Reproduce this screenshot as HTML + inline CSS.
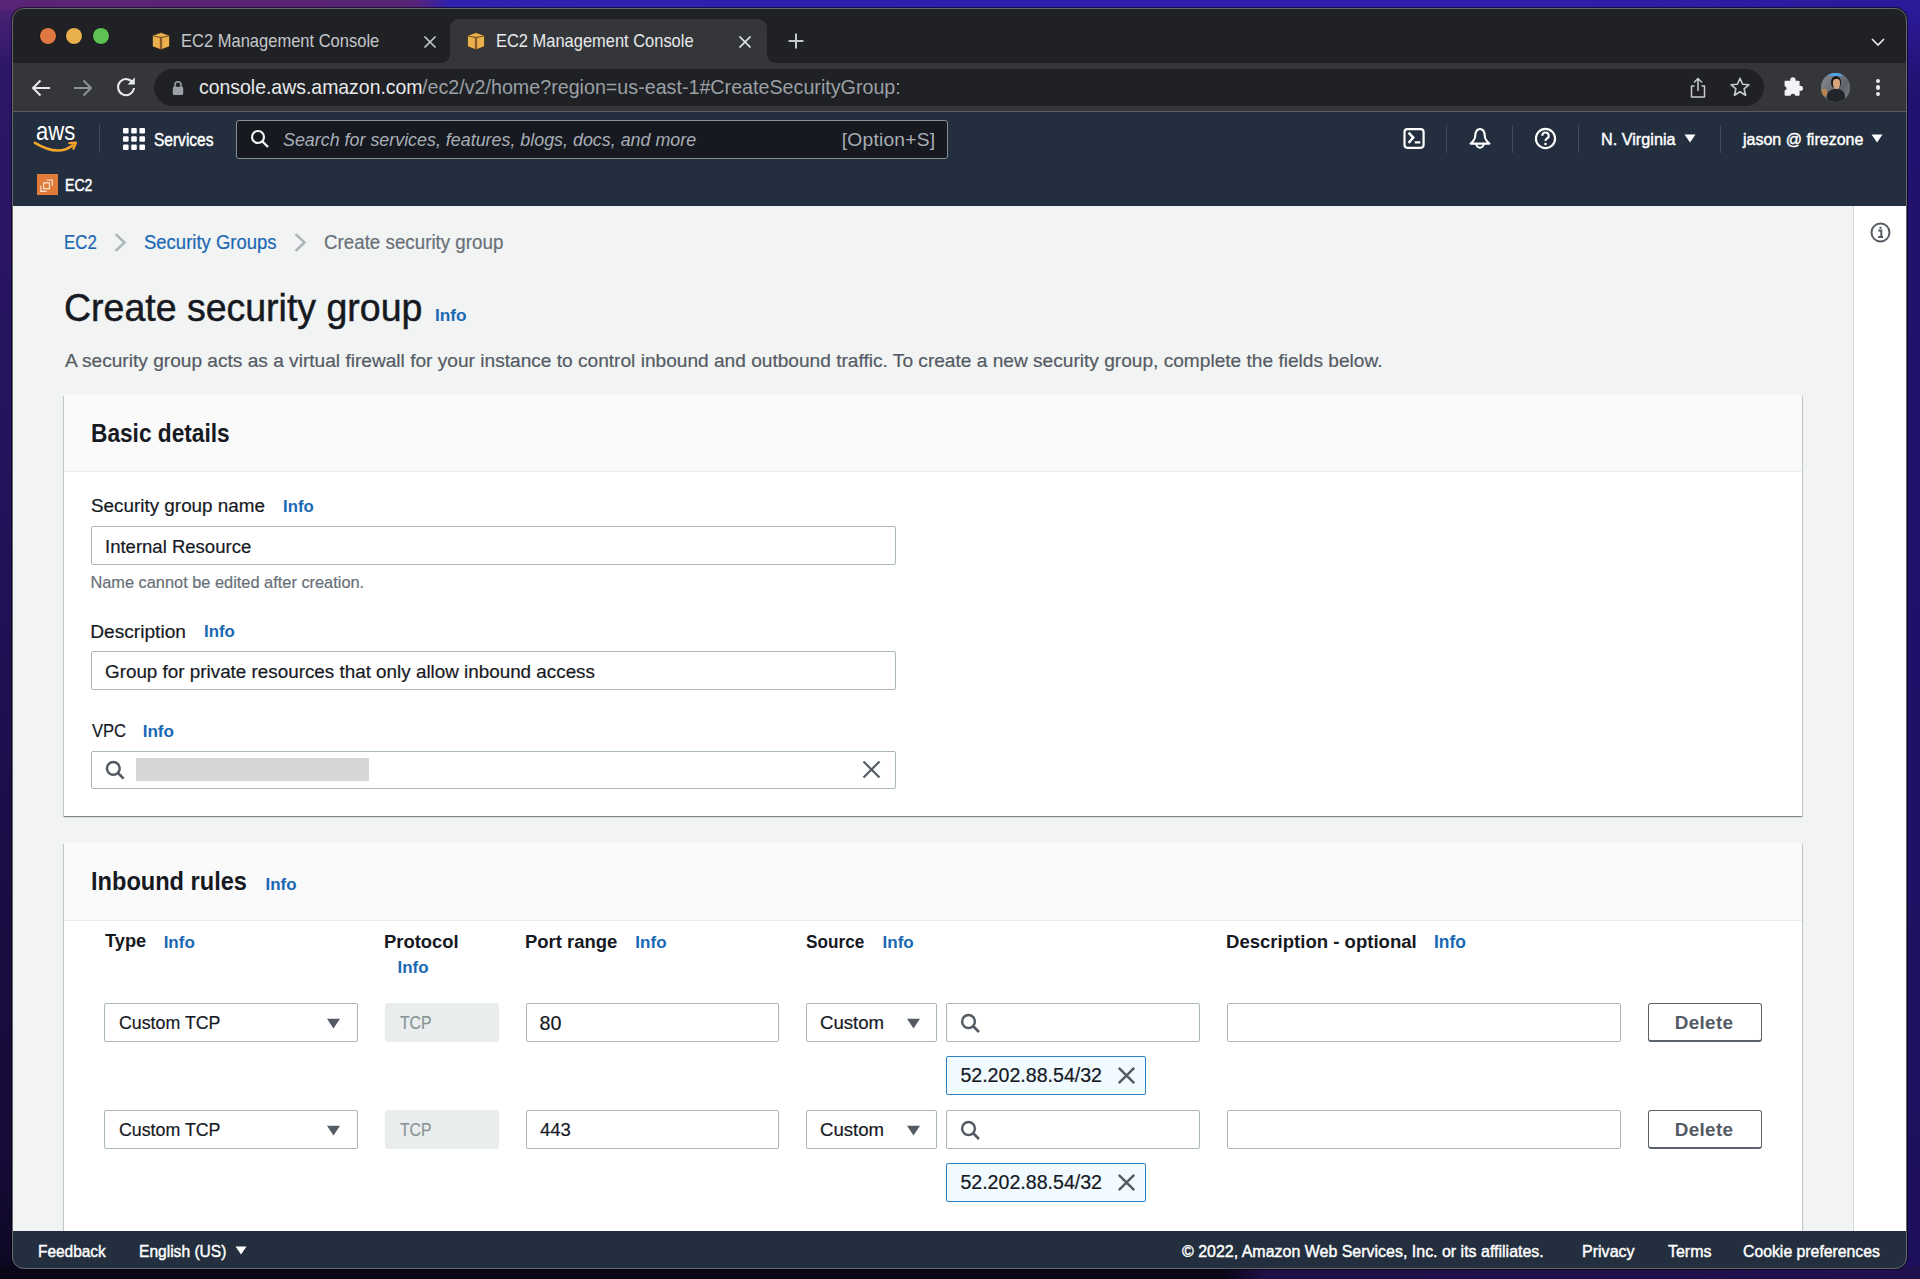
<!DOCTYPE html>
<html><head><meta charset="utf-8">
<style>
*{box-sizing:border-box;margin:0;padding:0}
html,body{width:1920px;height:1279px;overflow:hidden}
body{position:relative;font-family:"Liberation Sans",sans-serif;
 background:
  linear-gradient(90deg, rgba(92,38,122,1) 0px, rgba(88,36,120,1) 420px, rgba(46,32,166,1) 460px, rgba(44,28,160,1) 1920px);
}
.bgl{position:absolute;left:0;top:0;width:1920px;height:1279px;
 background:linear-gradient(180deg, rgba(0,0,0,0) 0px, rgba(0,0,0,0) 10px, rgba(8,4,20,0.0) 12px);}
.t{position:absolute;white-space:pre;font-family:"Liberation Sans",sans-serif}
.abs{position:absolute}
#win{position:absolute;left:12px;top:8px;width:1895px;height:1261px;border-radius:12px;overflow:hidden;background:#202124;box-shadow:0 0 0 1px rgba(0,0,0,.55)}
#winb{position:absolute;left:12px;top:8px;width:1895px;height:1261px;border-radius:12px;border:1px solid #64676b;pointer-events:none}
.inp{position:absolute;background:#fff;border:1px solid #aab7b8;border-radius:2px}
.info-l{color:#0073bb}
</style></head>
<body>
<div class="abs" style="left:0;top:0;width:1920px;height:1279px;background:#1a0c42"></div>
<div class="abs" style="left:0;top:0;width:1920px;height:12px;background:linear-gradient(90deg,#5a2476 0,#582478 415px,#3020ae 450px,#2f1fac 1500px,#2a1a98 1920px)"></div>
<div class="abs" style="left:0;top:10px;width:14px;height:1269px;background:linear-gradient(180deg,#4a2275 0,#2c1668 60px,#25135e 400px,#1f0f50 700px,#1a0c42 900px,#160b38 1150px,#0c0720 1269px)"></div>
<div class="abs" style="left:1905px;top:10px;width:15px;height:1269px;background:linear-gradient(180deg,#2b1a9a 0,#22116e 80px,#20106a 600px,#1e0f5c 1269px)"></div>
<div class="abs" style="left:0;top:1266px;width:1920px;height:13px;background:linear-gradient(90deg,#0a0618 0,#0a0618 1225px,#1f0f48 1265px,#21104e 1920px)"></div>
<div id="win">
 <!-- tab strip -->
 <div class="abs" style="left:0;top:0;width:1895px;height:55px;background:#202124"></div>
 <!-- traffic lights -->
 <div class="abs" style="left:27.5px;top:20px;width:16px;height:16px;border-radius:50%;background:#df7944;box-shadow:0 0 0 0.6px rgba(0,0,0,.5)"></div>
 <div class="abs" style="left:54px;top:20px;width:16px;height:16px;border-radius:50%;background:#e8b04c;box-shadow:0 0 0 0.6px rgba(0,0,0,.5)"></div>
 <div class="abs" style="left:80.5px;top:20px;width:16px;height:16px;border-radius:50%;background:#5fc153;box-shadow:0 0 0 0.6px rgba(0,0,0,.5)"></div>
 <!-- active tab -->
 <div class="abs" style="left:438px;top:11px;width:316.5px;height:45px;background:#35363a;border-radius:9px 9px 0 0"></div>
 <div class="abs" style="left:430px;top:47px;width:8px;height:8px;background:radial-gradient(circle at 0 0, #202124 7.5px, #35363a 8px)"></div>
 <div class="abs" style="left:754.5px;top:47px;width:8px;height:8px;background:radial-gradient(circle at 100% 0, #202124 7.5px, #35363a 8px)"></div>
 <!-- tab favicons -->
 <svg class="abs" style="left:139px;top:23px" width="20" height="20" viewBox="0 0 20 20">
  <path d="M1.5 4.5 L10 1.5 L18.5 4.5 L18.5 15.5 L10 18.8 L1.5 15.5 Z" fill="#e9b24e" stroke="#1a1a1a" stroke-width="0.6"/>
  <path d="M1.8 4.6 Q10 8 18.2 4.6" fill="none" stroke="#6b4a22" stroke-width="1"/>
  <path d="M10 6.2 L10 18" stroke="#6b4a22" stroke-width="1.6"/>
  <path d="M8.6 7 L8.6 18 M11.4 7 L11.4 18" stroke="#e4663a" stroke-width="0.6" stroke-dasharray="1 1"/>
 </svg>
 <svg class="abs" style="left:454px;top:23px" width="20" height="20" viewBox="0 0 20 20">
  <path d="M1.5 4.5 L10 1.5 L18.5 4.5 L18.5 15.5 L10 18.8 L1.5 15.5 Z" fill="#e9b24e" stroke="#1a1a1a" stroke-width="0.6"/>
  <path d="M1.8 4.6 Q10 8 18.2 4.6" fill="none" stroke="#6b4a22" stroke-width="1"/>
  <path d="M10 6.2 L10 18" stroke="#6b4a22" stroke-width="1.6"/>
  <path d="M8.6 7 L8.6 18 M11.4 7 L11.4 18" stroke="#e4663a" stroke-width="0.6" stroke-dasharray="1 1"/>
 </svg>
 <!-- tab close -->
 <svg class="abs" style="left:411px;top:27px" width="14" height="14" viewBox="0 0 14 14"><path d="M1.5 1.5 L12.5 12.5 M12.5 1.5 L1.5 12.5" stroke="#c4c7cb" stroke-width="1.7"/></svg>
 <svg class="abs" style="left:726px;top:27px" width="14" height="14" viewBox="0 0 14 14"><path d="M1.5 1.5 L12.5 12.5 M12.5 1.5 L1.5 12.5" stroke="#e8eaed" stroke-width="1.7"/></svg>
 <!-- new tab + -->
 <svg class="abs" style="left:775px;top:24px" width="18" height="18" viewBox="0 0 18 18"><path d="M9 1.5 V16.5 M1.5 9 H16.5" stroke="#c4c7cb" stroke-width="2"/></svg>
 <!-- tab list chevron -->
 <svg class="abs" style="left:1857.5px;top:27.5px" width="16" height="12" viewBox="0 0 16 12"><path d="M2 3 L8 9 L14 3" fill="none" stroke="#e8eaed" stroke-width="1.6"/></svg>

 <!-- toolbar -->
 <div class="abs" style="left:0;top:55px;width:1895px;height:48px;background:#35363a"></div>
 <div class="abs" style="left:0;top:102.5px;width:1895px;height:1px;background:#5a5c60"></div>
 <!-- back/forward/reload -->
 <svg class="abs" style="left:18px;top:69px" width="22" height="22" viewBox="0 0 22 22"><path d="M20 11 H3.5 M10.5 3.5 L3 11 L10.5 18.5" fill="none" stroke="#e8eaed" stroke-width="2"/></svg>
 <svg class="abs" style="left:60px;top:69px" width="22" height="22" viewBox="0 0 22 22"><path d="M2 11 H18.5 M11.5 3.5 L19 11 L11.5 18.5" fill="none" stroke="#8e9196" stroke-width="2"/></svg>
 <svg class="abs" style="left:103px;top:68px" width="22" height="22" viewBox="0 0 22 22"><path d="M18.2 7.5 A8 8 0 1 0 19 12" fill="none" stroke="#e8eaed" stroke-width="2"/><path d="M12.5 8.5 L19.8 8.5 L19.8 1.5 Z" fill="#e8eaed"/></svg>
 <!-- omnibox -->
 <div class="abs" style="left:142px;top:61px;width:1610px;height:37px;border-radius:18.5px;background:#202124"></div>
 <svg class="abs" style="left:160px;top:72px" width="12" height="16" viewBox="0 0 12 16"><path d="M3 7 V4.8 A3 3 0 0 1 9 4.8 V7" fill="none" stroke="#9aa0a6" stroke-width="1.6"/><rect x="0.8" y="6.8" width="10.4" height="8.2" rx="1.2" fill="#9aa0a6"/></svg>
 <!-- share / star -->
 <svg class="abs" style="left:1677px;top:69px" width="18" height="22" viewBox="0 0 18 22"><path d="M9 14 V2 M5 5.5 L9 1.5 L13 5.5" fill="none" stroke="#c8cbcf" stroke-width="1.5"/><path d="M5.5 9 H2.5 V20 H15.5 V9 H12.5" fill="none" stroke="#c8cbcf" stroke-width="1.5" stroke-linejoin="round"/></svg>
 <svg class="abs" style="left:1717px;top:68px" width="22" height="22" viewBox="0 0 22 22"><path d="M11 2.2 L13.6 8.2 L20 8.7 L15.1 12.9 L16.6 19.2 L11 15.8 L5.4 19.2 L6.9 12.9 L2 8.7 L8.4 8.2 Z" fill="none" stroke="#c8cbcf" stroke-width="1.6" stroke-linejoin="round"/></svg>
 <!-- puzzle -->
 <svg class="abs" style="left:1771px;top:68px" width="24" height="22" viewBox="0 0 24 22"><g fill="#f1f3f4"><rect x="1.6" y="4.8" width="15" height="15" rx="0.8"/><circle cx="9.9" cy="3.9" r="2.7"/><circle cx="17.4" cy="12.3" r="2.6"/></g><g fill="#35363a"><circle cx="1.4" cy="12.3" r="2.1"/><circle cx="9.9" cy="20.2" r="2.4"/></g></svg>
 <!-- avatar -->
 <div class="abs" style="left:1809px;top:64.5px;width:29px;height:29px;border-radius:50%;background:#6d7279;overflow:hidden">
  <div class="abs" style="left:0;top:0;width:29px;height:29px;background:linear-gradient(135deg,#8a9097 0,#5f646b 60%,#7b8088 100%)"></div>
  <div class="abs" style="left:5px;top:-1px;width:19px;height:4px;border-radius:50%;background:#4fa3e6"></div>
  <div class="abs" style="left:10px;top:3.5px;width:10px;height:12px;border-radius:50% 50% 40% 40%;background:#1e1a18"></div>
  <div class="abs" style="left:11.5px;top:6px;width:7.5px;height:10px;border-radius:40% 40% 50% 50%;background:#d9a57f"></div>
  <div class="abs" style="left:6px;top:16px;width:18px;height:15px;border-radius:45% 45% 0 0;background:#22242a"></div>
  <div class="abs" style="left:0px;top:16px;width:6px;height:7px;background:#c58a45;opacity:.8"></div>
 </div>
 <!-- kebab -->
 <div class="abs" style="left:1863.5px;top:70.5px;width:4.5px;height:4.5px;border-radius:50%;background:#e8eaed"></div>
 <div class="abs" style="left:1863.5px;top:77px;width:4.5px;height:4.5px;border-radius:50%;background:#e8eaed"></div>
 <div class="abs" style="left:1863.5px;top:83.5px;width:4.5px;height:4.5px;border-radius:50%;background:#e8eaed"></div>

 <!-- AWS nav -->
 <div class="abs" style="left:0;top:103.5px;width:1895px;height:94.5px;background:#232f3e"></div>
 <!-- aws logo -->
 <svg class="abs" style="left:20px;top:112px" width="48" height="34" viewBox="0 0 48 34">
  <text x="4.0" y="20.2" font-family="Liberation Sans" font-size="25" fill="#ffffff" textLength="39.2" lengthAdjust="spacingAndGlyphs">aws</text>
  <path d="M2.9 22.9 Q26.4 37 40.7 25.2" fill="none" stroke="#f3a52a" stroke-width="2.5" stroke-linecap="round"/>
  <path d="M37.3 23.1 L44 22.7 L41.4 28.8" fill="none" stroke="#f3a52a" stroke-width="2.2" stroke-linecap="round" stroke-linejoin="round"/>
 </svg>
 <div class="abs" style="left:87px;top:116px;width:1px;height:29px;background:#414d5c"></div>
 <!-- grid icon -->
 <svg class="abs" style="left:110.5px;top:119.5px" width="22" height="22" viewBox="0 0 22 22">
  <g fill="#ffffff"><rect x="0" y="0" width="5.6" height="5.6" rx="1"/><rect x="8.2" y="0" width="5.6" height="5.6" rx="1"/><rect x="16.4" y="0" width="5.6" height="5.6" rx="1"/>
  <rect x="0" y="8.2" width="5.6" height="5.6" rx="1"/><rect x="8.2" y="8.2" width="5.6" height="5.6" rx="1"/><rect x="16.4" y="8.2" width="5.6" height="5.6" rx="1"/>
  <rect x="0" y="16.4" width="5.6" height="5.6" rx="1"/><rect x="8.2" y="16.4" width="5.6" height="5.6" rx="1"/><rect x="16.4" y="16.4" width="5.6" height="5.6" rx="1"/></g>
 </svg>
 <!-- search box -->
 <div class="abs" style="left:223.5px;top:111.5px;width:712.5px;height:39px;background:#16191f;border:1px solid #879196;border-radius:3px"></div>
 <svg class="abs" style="left:238px;top:121px" width="20" height="20" viewBox="0 0 20 20"><circle cx="8" cy="8" r="6" fill="none" stroke="#f2f3f3" stroke-width="2.2"/><path d="M12.5 12.5 L18 18" stroke="#f2f3f3" stroke-width="2.4"/></svg>
 <!-- right icons -->
 <svg class="abs" style="left:1390px;top:119px" width="23" height="23" viewBox="0 0 23 23"><rect x="2.5" y="2.2" width="19.1" height="18.6" rx="3" fill="none" stroke="#fff" stroke-width="2.2"/><path d="M6.6 5.6 L11.2 10.6 L6.6 15.8" fill="none" stroke="#fff" stroke-width="2.5"/><path d="M12.8 15.4 H18.3" stroke="#fff" stroke-width="2.4"/></svg>
 <div class="abs" style="left:1434px;top:117px;width:1px;height:28px;background:#414d5c"></div>
 <svg class="abs" style="left:1456px;top:119px" width="24" height="23" viewBox="0 0 24 23"><path d="M12 2 C8.6 2 7.4 5.5 7.2 9.2 C7 12.6 5 14.6 2.6 16.6 L21.4 16.6 C19 14.6 17 12.6 16.8 9.2 C16.6 5.5 15.4 2 12 2 Z" fill="none" stroke="#fff" stroke-width="2.1" stroke-linejoin="round"/><path d="M8.4 17 A3.6 3.6 0 0 0 15.6 17" fill="none" stroke="#fff" stroke-width="2.1"/></svg>
 <div class="abs" style="left:1500px;top:117px;width:1px;height:28px;background:#414d5c"></div>
 <svg class="abs" style="left:1522px;top:119px" width="23" height="23" viewBox="0 0 23 23"><circle cx="11.5" cy="11.5" r="9.6" fill="none" stroke="#fff" stroke-width="2.1"/><path d="M8.3 8.8 A3.2 3.2 0 1 1 12.8 11.6 Q11.5 12.3 11.5 14" fill="none" stroke="#fff" stroke-width="2.1"/><circle cx="11.5" cy="17" r="1.3" fill="#fff"/></svg>
 <div class="abs" style="left:1566px;top:117px;width:1px;height:28px;background:#414d5c"></div>
 <svg class="abs" style="left:1672px;top:126px" width="12" height="9" viewBox="0 0 12 9"><path d="M0.5 0.5 H11.5 L6 8.5 Z" fill="#fff"/></svg>
 <div class="abs" style="left:1707.5px;top:117px;width:1px;height:28px;background:#414d5c"></div>
 <svg class="abs" style="left:1858.5px;top:126px" width="12" height="9" viewBox="0 0 12 9"><path d="M0.5 0.5 H11.5 L6 8.5 Z" fill="#fff"/></svg>
 <!-- EC2 icon -->
 <div class="abs" style="left:25px;top:165.8px;width:21px;height:21.5px;background:#e07b3a"></div>
 <svg class="abs" style="left:25px;top:165.8px" width="21" height="21.5" viewBox="0 0 22 22"><path d="M4 12 V18 H10 M7 9 V15 H13 V9 Z M10 6 H16 V12" fill="none" stroke="#fbe6d6" stroke-width="1.2"/></svg>

 <!-- content area -->
 <div class="abs" style="left:0;top:198px;width:1895px;height:1025px;background:#f2f3f3"></div>
 <div class="abs" style="left:1841px;top:198px;width:54px;height:1025px;background:#ffffff;border-left:1px solid #d5dbdb"></div>
 <svg class="abs" style="left:1858px;top:214px" width="21" height="21" viewBox="0 0 21 21"><circle cx="10.5" cy="10.5" r="9" fill="none" stroke="#545b64" stroke-width="2"/><rect x="9.5" y="4.8" width="2" height="2" fill="#545b64"/><path d="M8.2 8.5 H11.3 V14.5 M8.2 15 H13" fill="none" stroke="#545b64" stroke-width="2"/></svg>
 <!-- breadcrumbs chevrons -->
 <svg class="abs" style="left:101px;top:224px" width="15" height="21" viewBox="0 0 15 21"><path d="M2.6 2.2 L11.6 10.5 L2.6 18.8" fill="none" stroke="#aab7b8" stroke-width="2.5"/></svg>
 <svg class="abs" style="left:280.5px;top:224px" width="15" height="21" viewBox="0 0 15 21"><path d="M2.6 2.2 L11.6 10.5 L2.6 18.8" fill="none" stroke="#aab7b8" stroke-width="2.5"/></svg>

 <!-- container 1 -->
 <div class="abs" style="left:52px;top:387px;width:1738px;height:421px;background:#fff;box-shadow:0 1px 1px 0 rgba(0,28,36,.3),1px 1px 1px 0 rgba(0,28,36,.15),-1px 1px 1px 0 rgba(0,28,36,.15)">
  <div class="abs" style="left:0;top:0;width:1738px;height:77px;background:#fafafa;border-bottom:1px solid #eaeded"></div>
 </div>
 <div class="inp" style="left:79px;top:518px;width:805px;height:39px"></div>
 <div class="inp" style="left:79px;top:643px;width:805px;height:39px"></div>
 <div class="inp" style="left:79px;top:742.5px;width:805px;height:38.5px"></div>
 <svg class="abs" style="left:93px;top:752px" width="21" height="21" viewBox="0 0 21 21"><circle cx="8.3" cy="8.3" r="6.4" fill="none" stroke="#545b64" stroke-width="2.5"/><path d="M13 13 L18.6 18.6" stroke="#545b64" stroke-width="2.7"/></svg>
 <div class="abs" style="left:124px;top:750px;width:232.5px;height:23px;background:#d5d6d8"></div>
 <svg class="abs" style="left:850px;top:752px" width="19" height="19" viewBox="0 0 19 19"><path d="M1.5 1.5 L17.5 17.5 M17.5 1.5 L1.5 17.5" stroke="#545b64" stroke-width="2.2"/></svg>

 <!-- container 2 -->
 <div class="abs" style="left:52px;top:835px;width:1738px;height:450px;background:#fff;box-shadow:0 1px 1px 0 rgba(0,28,36,.3),1px 1px 1px 0 rgba(0,28,36,.15),-1px 1px 1px 0 rgba(0,28,36,.15)">
  <div class="abs" style="left:0;top:0;width:1738px;height:78px;background:#fafafa;border-bottom:1px solid #eaeded"></div>
 </div>
 <div class="inp" style="left:92.2px;top:995px;width:254px;height:39px"></div>
<svg class="abs" style="left:314px;top:1010px" width="15" height="11" viewBox="0 0 15 11"><path d="M1 0.8 H14 L7.5 10.5 Z" fill="#545b64"/></svg>
<div class="abs" style="left:373px;top:995px;width:113.7px;height:39px;background:#eaeded;border-radius:2px"></div>
<div class="inp" style="left:513.5px;top:995px;width:253px;height:39px"></div>
<div class="inp" style="left:794px;top:995px;width:131px;height:39px"></div>
<svg class="abs" style="left:893.5px;top:1010px" width="15" height="11" viewBox="0 0 15 11"><path d="M1 0.8 H14 L7.5 10.5 Z" fill="#545b64"/></svg>
<div class="inp" style="left:934.4px;top:995px;width:253.2px;height:39px"></div>
<svg class="abs" style="left:947.5px;top:1005px" width="21" height="21" viewBox="0 0 21 21"><circle cx="8.5" cy="8.5" r="6.4" fill="none" stroke="#545b64" stroke-width="2.5"/><path d="M13.2 13.2 L19 19" stroke="#545b64" stroke-width="2.7"/></svg>
<div class="inp" style="left:1215.3px;top:995px;width:393.6px;height:39px"></div>
<div class="abs" style="left:1636px;top:995px;width:114px;height:39.4px;border:1.6px solid #5b626a;border-bottom-width:2px;border-radius:3px;background:#fff"></div>
<div class="abs" style="left:934.4px;top:1048.4px;width:199.2px;height:38.4px;background:#f1faff;border:1px solid #2e83c8;border-radius:2px"></div>
<svg class="abs" style="left:1104.5px;top:1058.4px" width="19" height="19" viewBox="0 0 19 19"><path d="M1.8 1.8 L17.2 17.2 M17.2 1.8 L1.8 17.2" stroke="#545b64" stroke-width="2.5"/></svg>
<div class="inp" style="left:92.2px;top:1102px;width:254px;height:39px"></div>
<svg class="abs" style="left:314px;top:1117px" width="15" height="11" viewBox="0 0 15 11"><path d="M1 0.8 H14 L7.5 10.5 Z" fill="#545b64"/></svg>
<div class="abs" style="left:373px;top:1102px;width:113.7px;height:39px;background:#eaeded;border-radius:2px"></div>
<div class="inp" style="left:513.5px;top:1102px;width:253px;height:39px"></div>
<div class="inp" style="left:794px;top:1102px;width:131px;height:39px"></div>
<svg class="abs" style="left:893.5px;top:1117px" width="15" height="11" viewBox="0 0 15 11"><path d="M1 0.8 H14 L7.5 10.5 Z" fill="#545b64"/></svg>
<div class="inp" style="left:934.4px;top:1102px;width:253.2px;height:39px"></div>
<svg class="abs" style="left:947.5px;top:1112px" width="21" height="21" viewBox="0 0 21 21"><circle cx="8.5" cy="8.5" r="6.4" fill="none" stroke="#545b64" stroke-width="2.5"/><path d="M13.2 13.2 L19 19" stroke="#545b64" stroke-width="2.7"/></svg>
<div class="inp" style="left:1215.3px;top:1102px;width:393.6px;height:39px"></div>
<div class="abs" style="left:1636px;top:1102px;width:114px;height:39.4px;border:1.6px solid #5b626a;border-bottom-width:2px;border-radius:3px;background:#fff"></div>
<div class="abs" style="left:934.4px;top:1155.4px;width:199.2px;height:38.4px;background:#f1faff;border:1px solid #2e83c8;border-radius:2px"></div>
<svg class="abs" style="left:1104.5px;top:1165.4px" width="19" height="19" viewBox="0 0 19 19"><path d="M1.8 1.8 L17.2 17.2 M17.2 1.8 L1.8 17.2" stroke="#545b64" stroke-width="2.5"/></svg>

 <!-- footer -->
 <div class="abs" style="left:0;top:1223px;width:1895px;height:38px;background:#232f3e"></div>
 <svg class="abs" style="left:222.5px;top:1238px" width="12" height="9" viewBox="0 0 12 9"><path d="M0.5 0.5 H11.5 L6 8.5 Z" fill="#fff"/></svg>
</div>
<div class="abs" style="left:0;top:0;width:1920px;height:1279px;">
<div class="t" style="left:180.71px;top:32.20px;font-size:18.31px;line-height:18.31px;color:#c4c7cb;transform:scaleX(0.9025);transform-origin:0 0;">EC2 Management Console</div>
<div class="t" style="left:496.41px;top:32.10px;font-size:18.31px;line-height:18.31px;color:#e8eaed;transform:scaleX(0.8993);transform-origin:0 0;">EC2 Management Console</div>
<div class="t" style="left:199.09px;top:77.23px;font-size:20.64px;line-height:20.64px;color:#e8eaed;transform:scaleX(0.9421);transform-origin:0 0;">console.aws.amazon.com</div>
<div class="t" style="left:422.30px;top:77.23px;font-size:20.64px;line-height:20.64px;color:#9aa0a6;transform:scaleX(0.9545);transform-origin:0 0;">/ec2/v2/home?region=us-east-1#CreateSecurityGroup:</div>
<div class="t" style="left:154.32px;top:130.94px;font-size:18.02px;line-height:18.02px;color:#ffffff;transform:scaleX(0.8605);transform-origin:0 0;-webkit-text-stroke:0.45px #ffffff;">Services</div>
<div class="t" style="left:282.72px;top:131.00px;font-size:18.31px;line-height:18.31px;color:#a7aeb6;transform:scaleX(0.9765);transform-origin:0 0;font-style:italic;">Search for services, features, blogs, docs, and more</div>
<div class="t" style="left:841.80px;top:130.22px;font-size:19.23px;line-height:19.23px;color:#a7aeb6;letter-spacing:0.216px;">[Option+S]</div>
<div class="t" style="left:1600.93px;top:131.18px;font-size:17.15px;line-height:17.15px;color:#ffffff;transform:scaleX(0.9462);transform-origin:0 0;-webkit-text-stroke:0.45px #ffffff;">N. Virginia</div>
<div class="t" style="left:1743.20px;top:131.18px;font-size:17.15px;line-height:17.15px;color:#ffffff;transform:scaleX(0.9340);transform-origin:0 0;-webkit-text-stroke:0.45px #ffffff;">jason @ firezone</div>
<div class="t" style="left:64.70px;top:177.48px;font-size:17.15px;line-height:17.15px;color:#ffffff;transform:scaleX(0.8235);transform-origin:0 0;-webkit-text-stroke:0.45px #ffffff;">EC2</div>
<div class="t" style="left:63.88px;top:232.87px;font-size:19.77px;line-height:19.77px;color:#1a68b4;transform:scaleX(0.8530);transform-origin:0 0;-webkit-text-stroke:0.2px #1a68b4;">EC2</div>
<div class="t" style="left:144.42px;top:232.87px;font-size:19.77px;line-height:19.77px;color:#1a68b4;transform:scaleX(0.9353);transform-origin:0 0;-webkit-text-stroke:0.2px #1a68b4;">Security Groups</div>
<div class="t" style="left:323.82px;top:232.87px;font-size:19.77px;line-height:19.77px;color:#687078;transform:scaleX(0.9490);transform-origin:0 0;-webkit-text-stroke:0.2px #687078;">Create security group</div>
<div class="t" style="left:64.24px;top:289.23px;font-size:38.95px;line-height:38.95px;color:#16191f;transform:scaleX(0.9626);transform-origin:0 0;-webkit-text-stroke:0.5px #16191f;">Create security group</div>
<div class="t" style="left:434.92px;top:307.18px;font-size:17.27px;line-height:17.27px;color:#1a68b4;font-weight:bold;">Info</div>
<div class="t" style="left:65.00px;top:351.21px;font-size:19.12px;line-height:19.12px;color:#545b64;-webkit-text-stroke:0.2px #545b64;">A security group acts as a virtual firewall for your instance to control inbound and outbound traffic. To create a new security group, complete the fields below.</div>
<div class="t" style="left:90.78px;top:420.99px;font-size:25.29px;line-height:25.29px;color:#16191f;transform:scaleX(0.8972);transform-origin:0 0;font-weight:bold;">Basic details</div>
<div class="t" style="left:91.11px;top:496.91px;font-size:18.90px;line-height:18.90px;color:#16191f;transform:scaleX(0.9983);transform-origin:0 0;-webkit-text-stroke:0.2px #16191f;">Security group name</div>
<div class="t" style="left:282.85px;top:498.63px;font-size:16.86px;line-height:16.86px;color:#1a68b4;transform:scaleX(0.9935);transform-origin:0 0;font-weight:bold;">Info</div>
<div class="t" style="left:104.80px;top:537.51px;font-size:18.90px;line-height:18.90px;color:#16191f;transform:scaleX(0.9806);transform-origin:0 0;-webkit-text-stroke:0.2px #16191f;">Internal Resource</div>
<div class="t" style="left:90.42px;top:574.04px;font-size:16.38px;line-height:16.38px;color:#687078;-webkit-text-stroke:0.2px #687078;">Name cannot be edited after creation.</div>
<div class="t" style="left:90.20px;top:622.47px;font-size:19.17px;line-height:19.17px;color:#16191f;-webkit-text-stroke:0.2px #16191f;">Description</div>
<div class="t" style="left:203.75px;top:624.43px;font-size:16.86px;line-height:16.86px;color:#1a68b4;transform:scaleX(0.9969);transform-origin:0 0;font-weight:bold;">Info</div>
<div class="t" style="left:105.32px;top:662.71px;font-size:18.90px;line-height:18.90px;color:#16191f;transform:scaleX(0.9970);transform-origin:0 0;-webkit-text-stroke:0.2px #16191f;">Group for private resources that only allow inbound access</div>
<div class="t" style="left:91.50px;top:721.61px;font-size:18.90px;line-height:18.90px;color:#16191f;transform:scaleX(0.8770);transform-origin:0 0;-webkit-text-stroke:0.2px #16191f;">VPC</div>
<div class="t" style="left:142.63px;top:723.08px;font-size:17.15px;line-height:17.15px;color:#1a68b4;font-weight:bold;">Info</div>
<div class="t" style="left:90.72px;top:869.39px;font-size:25.29px;line-height:25.29px;color:#16191f;transform:scaleX(0.9332);transform-origin:0 0;font-weight:bold;">Inbound rules</div>
<div class="t" style="left:265.44px;top:876.43px;font-size:16.98px;line-height:16.98px;color:#1a68b4;font-weight:bold;">Info</div>
<div class="t" style="left:104.60px;top:932.41px;font-size:18.90px;line-height:18.90px;color:#16191f;transform:scaleX(0.9662);transform-origin:0 0;font-weight:bold;">Type</div>
<div class="t" style="left:384.35px;top:932.81px;font-size:18.90px;line-height:18.90px;color:#16191f;transform:scaleX(0.9753);transform-origin:0 0;font-weight:bold;">Protocol</div>
<div class="t" style="left:524.75px;top:932.61px;font-size:18.90px;line-height:18.90px;color:#16191f;transform:scaleX(0.9780);transform-origin:0 0;font-weight:bold;">Port range</div>
<div class="t" style="left:806.13px;top:932.61px;font-size:18.90px;line-height:18.90px;color:#16191f;transform:scaleX(0.9101);transform-origin:0 0;font-weight:bold;">Source</div>
<div class="t" style="left:1226.34px;top:932.61px;font-size:18.90px;line-height:18.90px;color:#16191f;transform:scaleX(0.9823);transform-origin:0 0;font-weight:bold;">Description - optional</div>
<div class="t" style="left:163.64px;top:934.18px;font-size:17.04px;line-height:17.04px;color:#1a68b4;font-weight:bold;">Info</div>
<div class="t" style="left:397.54px;top:959.87px;font-size:16.92px;line-height:16.92px;color:#1a68b4;letter-spacing:-0.000px;font-weight:bold;">Info</div>
<div class="t" style="left:635.34px;top:934.18px;font-size:17.04px;line-height:17.04px;color:#1a68b4;font-weight:bold;">Info</div>
<div class="t" style="left:882.54px;top:934.18px;font-size:17.04px;line-height:17.04px;color:#1a68b4;font-weight:bold;">Info</div>
<div class="t" style="left:1433.91px;top:933.84px;font-size:17.44px;line-height:17.44px;color:#1a68b4;letter-spacing:0.000px;font-weight:bold;">Info</div>
<div class="t" style="left:118.67px;top:1014.41px;font-size:18.90px;line-height:18.90px;color:#16191f;transform:scaleX(0.9412);transform-origin:0 0;-webkit-text-stroke:0.2px #16191f;">Custom TCP</div>
<div class="t" style="left:399.95px;top:1014.41px;font-size:18.90px;line-height:18.90px;color:#879596;transform:scaleX(0.8337);transform-origin:0 0;-webkit-text-stroke:0.2px #879596;">TCP</div>
<div class="t" style="left:820.43px;top:1014.41px;font-size:18.90px;line-height:18.90px;color:#16191f;transform:scaleX(0.9852);transform-origin:0 0;-webkit-text-stroke:0.2px #16191f;">Custom</div>
<div class="t" style="left:960.39px;top:1066.41px;font-size:19.60px;line-height:19.60px;color:#16191f;-webkit-text-stroke:0.2px #16191f;">52.202.88.54/32</div>
<div class="t" style="left:1674.82px;top:1014.38px;font-size:18.92px;line-height:18.92px;color:#545b64;letter-spacing:0.291px;font-weight:bold;">Delete</div>
<div class="t" style="left:118.67px;top:1121.41px;font-size:18.90px;line-height:18.90px;color:#16191f;transform:scaleX(0.9412);transform-origin:0 0;-webkit-text-stroke:0.2px #16191f;">Custom TCP</div>
<div class="t" style="left:399.95px;top:1121.41px;font-size:18.90px;line-height:18.90px;color:#879596;transform:scaleX(0.8337);transform-origin:0 0;-webkit-text-stroke:0.2px #879596;">TCP</div>
<div class="t" style="left:820.43px;top:1121.41px;font-size:18.90px;line-height:18.90px;color:#16191f;transform:scaleX(0.9852);transform-origin:0 0;-webkit-text-stroke:0.2px #16191f;">Custom</div>
<div class="t" style="left:960.39px;top:1173.41px;font-size:19.60px;line-height:19.60px;color:#16191f;-webkit-text-stroke:0.2px #16191f;">52.202.88.54/32</div>
<div class="t" style="left:1674.82px;top:1121.38px;font-size:18.92px;line-height:18.92px;color:#545b64;letter-spacing:0.291px;font-weight:bold;">Delete</div>
<div class="t" style="left:539.58px;top:1013.73px;font-size:19.69px;line-height:19.69px;color:#16191f;-webkit-text-stroke:0.2px #16191f;">80</div>
<div class="t" style="left:539.91px;top:1121.41px;font-size:18.90px;line-height:18.90px;color:#16191f;transform:scaleX(0.9782);transform-origin:0 0;-webkit-text-stroke:0.2px #16191f;">443</div>
<div class="t" style="left:37.54px;top:1242.73px;font-size:17.15px;line-height:17.15px;color:#ffffff;transform:scaleX(0.9003);transform-origin:0 0;-webkit-text-stroke:0.45px #ffffff;">Feedback</div>
<div class="t" style="left:139.38px;top:1242.73px;font-size:17.15px;line-height:17.15px;color:#ffffff;transform:scaleX(0.9081);transform-origin:0 0;-webkit-text-stroke:0.45px #ffffff;">English (US)</div>
<div class="t" style="left:1181.60px;top:1242.73px;font-size:17.15px;line-height:17.15px;color:#ffffff;transform:scaleX(0.9316);transform-origin:0 0;-webkit-text-stroke:0.45px #ffffff;">© 2022, Amazon Web Services, Inc. or its affiliates.</div>
<div class="t" style="left:1581.75px;top:1242.73px;font-size:17.15px;line-height:17.15px;color:#ffffff;transform:scaleX(0.9365);transform-origin:0 0;-webkit-text-stroke:0.45px #ffffff;">Privacy</div>
<div class="t" style="left:1667.75px;top:1242.73px;font-size:17.15px;line-height:17.15px;color:#ffffff;transform:scaleX(0.9306);transform-origin:0 0;-webkit-text-stroke:0.45px #ffffff;">Terms</div>
<div class="t" style="left:1743.26px;top:1242.73px;font-size:17.15px;line-height:17.15px;color:#ffffff;transform:scaleX(0.9214);transform-origin:0 0;-webkit-text-stroke:0.45px #ffffff;">Cookie preferences</div>
</div>
<div id="winb"></div>
</body></html>
